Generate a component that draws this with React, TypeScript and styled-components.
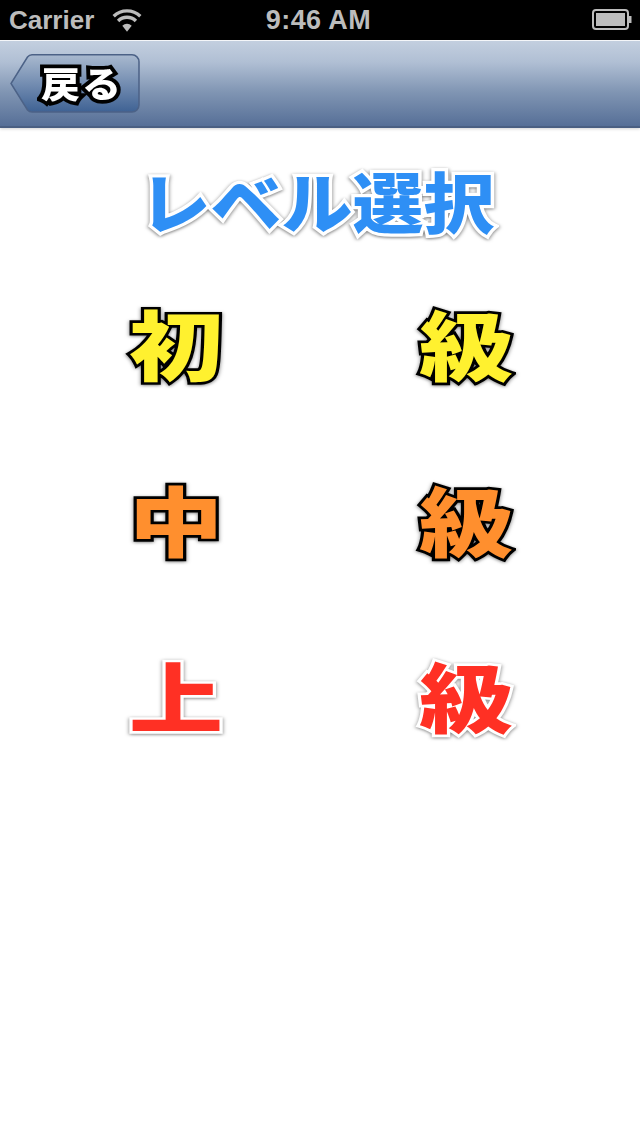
import React from 'react'
import styled, {createGlobalStyle} from 'styled-components'

const GlobalStyle = createGlobalStyle`
  html, body {
    margin: 0;
    padding: 0;
    background: #fff;
  }
`

const Page = styled.div`
  width: 640px;
  height: 1136px;
  display: flex;
  flex-direction: column;
  overflow: hidden;
  background: #fff;
  font-family: 'Noto Sans CJK JP', 'Liberation Sans', sans-serif;
`

const StatusBar = styled.div`
  height: 40px;
  flex: none;
  display: grid;
  grid-template-columns: 1fr auto 1fr;
  align-items: center;
  padding: 0 8px 0 9px;
  background: #000;
  color: #bcbcbc;
  font-family: 'Liberation Sans', Arial, sans-serif;
  font-weight: 700;
  font-size: 26px;
`

const StatusLeft = styled.div`
  display: flex;
  align-items: center;
  gap: 18px;
`

const StatusTime = styled.span`
  font-size: 27px;
  letter-spacing: 0.4px;
  margin-left: -4px;
`

const StatusRight = styled.div`
  display: flex;
  justify-content: flex-end;
`

const NavBar = styled.div`
  height: 88px;
  flex: none;
  display: flex;
  align-items: center;
  padding-left: 10px;
  box-sizing: border-box;
  border-top: 1px solid #f4f6f9;
  border-bottom: 2px solid #4a5f82;
  background: linear-gradient(#c3cfdf 0%, #b0bfd4 25%, #8095b3 60%, #566f97 100%);
  box-shadow: 0 1px 3px rgba(0, 0, 0, 0.18);
`

const BackButton = styled.button`
  position: relative;
  width: 130px;
  height: 59px;
  padding: 0 0 3px 31px;
  border: none;
  background: none;
  display: flex;
  align-items: center;
`

const BackShape = styled.svg`
  position: absolute;
  inset: 0;
`

const BackLabel = styled.span`
  position: relative;
  font-family: 'Noto Sans CJK JP', sans-serif;
  font-weight: 900;
  font-size: 39px;
  line-height: 1;
  letter-spacing: 2px;
  color: #fff;
  -webkit-text-stroke: 8px #000;
  paint-order: stroke fill;
  transform: scaleY(0.94);
`

const Title = styled.h1`
  margin: 26px 0 0;
  padding-right: 6px;
  text-align: center;
  font-size: 71px;
  line-height: 90px;
  font-weight: 900;
  color: #2e8ff5;
  -webkit-text-stroke: 7px #fff;
  paint-order: stroke fill;
  transform: scaleY(0.93);
  filter: drop-shadow(0 1px 2px rgba(0, 0, 0, 0.55));
`

const LevelGrid = styled.div`
  margin-top: 10px;
  padding-left: 2px;
  display: grid;
  grid-template-columns: 290px 290px;
  grid-auto-rows: 176px;
  justify-content: center;
`

const Cell = styled.div<{$color: string; $outline: string}>`
  display: flex;
  align-items: center;
  justify-content: center;
  font-size: 94px;
  font-weight: 900;
  color: ${(props) => props.$color};
  -webkit-text-stroke: 6.5px ${(props) => props.$outline};
  paint-order: stroke fill;
  transform: scaleY(0.81);
  filter: drop-shadow(0 1px 2px rgba(0, 0, 0, 0.5));
`

const levels = [
  {name: '初', color: '#fff12f', outline: '#000'},
  {name: '中', color: '#ff8f2e', outline: '#000'},
  {name: '上', color: '#ff3024', outline: '#fff'},
]

const App = () => (
  <Page>
    <GlobalStyle />
    <StatusBar>
      <StatusLeft>
        <span>Carrier</span>
        <svg width="30" height="23" viewBox="0 0 32 24">
          <path d="M16 24l-5-6.5a7.5 7.5 0 0 1 10 0z" fill="#bcbcbc" />
          <path d="M6.5 12.5a13.5 13.5 0 0 1 19 0" fill="none" stroke="#bcbcbc" strokeWidth="3.6" />
          <path d="M1.8 7.5a20.5 20.5 0 0 1 28.4 0" fill="none" stroke="#bcbcbc" strokeWidth="3.6" />
        </svg>
      </StatusLeft>
      <StatusTime>9:46 AM</StatusTime>
      <StatusRight>
        <svg width="40" height="22" viewBox="0 0 40 22">
          <rect x="1" y="1" width="35" height="19" rx="3" fill="none" stroke="#bcbcbc" strokeWidth="2" />
          <rect x="4" y="4" width="29" height="13" fill="#bcbcbc" />
          <path d="M37 7h2.500v7H37z" fill="#bcbcbc" />
        </svg>
      </StatusRight>
    </StatusBar>
    <NavBar>
      <BackButton>
        <BackShape width="130" height="59" viewBox="0 0 130 59">
          <defs>
            <linearGradient id="backFill" x1="0" y1="0" x2="0" y2="1">
              <stop offset="0" stopColor="#a9b9cf" />
              <stop offset="1" stopColor="#3f6294" />
            </linearGradient>
          </defs>
          <path
            d="M22 .8H122a7 7 0 0 1 7 7V51a7 7 0 0 1-7 7H22a6 6 0 0 1-4.500-2L1 29.500 17.500 3a6 6 0 0 1 4.500-2.200z"
            fill="url(#backFill)"
            stroke="#4c6287"
            strokeWidth="1.500"
          />
        </BackShape>
        <BackLabel>戻る</BackLabel>
      </BackButton>
    </NavBar>
    <Title>レベル選択</Title>
    <LevelGrid>
      {levels.map((level) => (
        <React.Fragment key={level.name}>
          <Cell $color={level.color} $outline={level.outline}>{level.name}</Cell>
          <Cell $color={level.color} $outline={level.outline}>級</Cell>
        </React.Fragment>
      ))}
    </LevelGrid>
  </Page>
)

export default App
